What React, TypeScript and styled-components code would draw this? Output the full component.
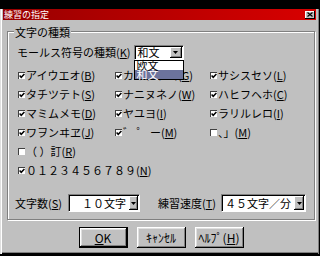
import React from "react";
import styled, { createGlobalStyle } from "styled-components";

const FONT = `"Noto Sans CJK JP", "Noto Sans", "Liberation Sans", sans-serif`;

const Global = createGlobalStyle`
  html, body { margin: 0; padding: 0; background: #000; }
  body { width: 320px; height: 256px; overflow: hidden; font-family: ${FONT}; }
  #root { width: 320px; }
`;

const Window = styled.div`
  box-sizing: border-box;
  margin-top: 9px;
  width: 320px;
  height: 245px;
  padding: 0 4px 2px 3px;
  background: #c0c0c0;
  box-shadow: inset 1px 0 #dfdfdf, inset 2px 0 #fff, inset -1px 0 #000,
    inset -2px 0 #808080, inset 0 -1px #000, inset 0 -2px #808080;
  color: #000;
  font-family: ${FONT};
  display: flex;
  flex-direction: column;
`;

const TitleBar = styled.div`
  flex: none;
  height: 11px;
  display: flex;
  align-items: center;
  justify-content: space-between;
  padding: 0 1px;
  background: linear-gradient(to right, #980000, #d80000);
`;

const TitleText = styled.span`
  color: #fff;
  font-size: 9px;
  line-height: 11px;
  white-space: nowrap;
`;

const CloseButton = styled.div`
  width: 10px;
  height: 8px;
  box-sizing: border-box;
  background: #c0c0c0;
  box-shadow: inset -1px -1px #000, inset 1px 1px #fff;
  display: flex;
  align-items: center;
  justify-content: center;
`;

const Body = styled.div`
  flex: 1;
  display: flex;
  flex-direction: column;
  padding: 11px 1px 0 4px;
`;

const Group = styled.div`
  position: relative;
  border: 1px solid #808080;
  box-shadow: inset 1px 1px #fff, 1px 1px #fff;
  padding: 13px 0 7px 7px;
`;

const GroupLabel = styled.span`
  position: absolute;
  top: -5px;
  left: 6px;
  padding: 0 1px;
  background: #c0c0c0;
  font-size: 11px;
  line-height: 10px;
  white-space: nowrap;
`;

const MorseRow = styled.div`
  display: flex;
  align-items: center;
  gap: 3px;
  height: 15px;
  padding-left: 2px;
  font-size: 11px;
  line-height: 15px;
  white-space: nowrap;
`;

const Combo = styled.div<{ $w: number }>`
  position: relative;
  box-sizing: border-box;
  width: ${(p) => p.$w}px;
  height: 100%;
  display: flex;
  align-items: stretch;
  background: #fff;
  border-style: solid;
  border-width: 1px;
  border-color: #808080 #fff #fff #808080;
  box-shadow: inset 1px 1px #000;
  padding: 1px 1px 1px 1px;
`;

const ComboValue = styled.span<{ $right?: boolean }>`
  flex: 1;
  display: flex;
  align-items: center;
  justify-content: ${(p) => (p.$right ? "flex-end" : "flex-start")};
  padding: ${(p) => (p.$right ? "0 3px 0 0" : "0 0 0 2px")};
  font-size: 11px;
  white-space: nowrap;
`;

const DropButton = styled.span<{ $w: number }>`
  width: ${(p) => p.$w}px;
  flex: none;
  box-sizing: border-box;
  background: #c0c0c0;
  box-shadow: inset -1px -1px #000, inset 1px 1px #fff, inset -2px -2px #808080;
  display: flex;
  align-items: center;
  justify-content: center;
`;

const DropList = styled.div`
  position: absolute;
  left: -1px;
  top: 14px;
  width: 50px;
  box-sizing: border-box;
  border: 1px solid #000;
  background: #fff;
  z-index: 2;
`;

const DropItem = styled.div<{ $selected?: boolean }>`
  height: 9px;
  line-height: 9px;
  padding-left: 2px;
  font-size: 11px;
  background: ${(p) => (p.$selected ? "#6c739c" : "#fff")};
  color: ${(p) => (p.$selected ? "#fff" : "#000")};
`;

const CheckGrid = styled.div`
  display: grid;
  grid-template-columns: 97px 95px 1fr;
  grid-auto-rows: 19px;
  margin-top: 6px;
  padding-left: 3px;
  font-size: 11px;
`;

const CheckItem = styled.div<{ $wide?: boolean }>`
  display: flex;
  align-items: center;
  gap: 1px;
  white-space: nowrap;
  line-height: 19px;
  grid-column: ${(p) => (p.$wide ? "1 / -1" : "auto")};
`;

const Box = styled.span`
  width: 7px;
  height: 7px;
  box-sizing: border-box;
  flex: none;
  background: #fff;
  border-top: 1px solid #404040;
  border-left: 1px solid #404040;
  display: flex;
  align-items: center;
  justify-content: center;
`;

const Acc = styled.span`
  text-decoration: underline;
  text-underline-offset: 1px;
`;

const BottomRow = styled.div`
  display: flex;
  align-items: center;
  height: 18px;
  margin-top: 14px;
  font-size: 11px;
  white-space: nowrap;
`;

const FieldLabel = styled.span<{ $ml?: number; $mr: number }>`
  margin-left: ${(p) => p.$ml ?? 0}px;
  margin-right: ${(p) => p.$mr}px;
`;

const ButtonRow = styled.div`
  display: flex;
  justify-content: center;
  gap: 9px;
  margin-top: 7px;
`;

const Button = styled.div<{ $default?: boolean }>`
  width: 49px;
  height: 21px;
  box-sizing: border-box;
  display: flex;
  align-items: center;
  justify-content: center;
  background: #c0c0c0;
  font-size: 12px;
  border: ${(p) => (p.$default ? "1px solid #000" : "none")};
  box-shadow: inset -1px -1px #000, inset 1px 1px #fff, inset -2px -2px #808080,
    inset 2px 2px #dfdfdf;
  white-space: nowrap;
`;

const Arrow = () => (
  <svg width="5" height="3" viewBox="0 0 5 3">
    <polygon points="0,0 5,0 2.5,3" fill="#000" />
  </svg>
);

const Check = ({ on }: { on: boolean }) => (
  <Box>
    {on && (
      <svg width="6" height="6" viewBox="0 0 6 6">
        <path d="M0.6 2.6 L2.2 4.3 L5.4 0.9" stroke="#000" strokeWidth="1.5" fill="none" />
      </svg>
    )}
  </Box>
);

type Item = { text: string; acc: string; on: boolean; wide?: boolean } | null;

const items: Item[] = [
  { text: "アイウエオ", acc: "B", on: true },
  { text: "カキクケコ", acc: "G", on: true },
  { text: "サシスセソ", acc: "L", on: true },
  { text: "タチツテト", acc: "S", on: true },
  { text: "ナニヌネノ", acc: "W", on: true },
  { text: "ハヒフヘホ", acc: "C", on: true },
  { text: "マミムメモ", acc: "D", on: true },
  { text: "ヤユヨ", acc: "I", on: true },
  { text: "ラリルレロ", acc: "I", on: true },
  { text: "ワヲンヰヱ", acc: "J", on: true },
  { text: "゛ ゜ ー", acc: "M", on: true },
  { text: "、」", acc: "M", on: false },
  { text: "（ ）訂", acc: "R", on: false, wide: true },
  { text: "０１２３４５６７８９", acc: "N", on: true, wide: true },
];

export default function App() {
  return (
    <>
      <Global />
      <Window>
        <TitleBar>
          <TitleText>練習の指定</TitleText>
          <CloseButton>
            <svg width="6" height="5" viewBox="0 0 6 5">
              <path d="M0.5 0.5 L5.5 4.5 M5.5 0.5 L0.5 4.5" stroke="#000" strokeWidth="1.2" />
            </svg>
          </CloseButton>
        </TitleBar>
        <Body>
          <Group>
            <GroupLabel>文字の種類</GroupLabel>
            <MorseRow>
              <span>
                モールス符号の種類(<Acc>K</Acc>)
              </span>
              <Combo $w={50}>
                <ComboValue>和文</ComboValue>
                <DropButton $w={12}>
                  <Arrow />
                </DropButton>
                <DropList>
                  <DropItem>欧文</DropItem>
                  <DropItem $selected>和文</DropItem>
                </DropList>
              </Combo>
            </MorseRow>
            <CheckGrid>
              {items.map((it, i) =>
                it ? (
                  <CheckItem key={i} $wide={it.wide}>
                    <Check on={it.on} />
                    <span>
                      {it.text}(<Acc>{it.acc}</Acc>)
                    </span>
                  </CheckItem>
                ) : null
              )}
            </CheckGrid>
            <BottomRow>
              <FieldLabel $mr={6}>
                文字数(<Acc>S</Acc>)
              </FieldLabel>
              <Combo $w={72}>
                <ComboValue $right>１０文字</ComboValue>
                <DropButton $w={9}>
                  <Arrow />
                </DropButton>
              </Combo>
              <FieldLabel $ml={18} $mr={5}>
                練習速度(<Acc>T</Acc>)
              </FieldLabel>
              <Combo $w={85}>
                <ComboValue $right>４５文字／分</ComboValue>
                <DropButton $w={10}>
                  <Arrow />
                </DropButton>
              </Combo>
            </BottomRow>
          </Group>
          <ButtonRow>
            <Button $default>
              <span>
                <Acc>O</Acc>K
              </span>
            </Button>
            <Button>ｷｬﾝｾﾙ</Button>
            <Button>
              <span>
                ﾍﾙﾌﾟ(<Acc>H</Acc>)
              </span>
            </Button>
          </ButtonRow>
        </Body>
      </Window>
    </>
  );
}
